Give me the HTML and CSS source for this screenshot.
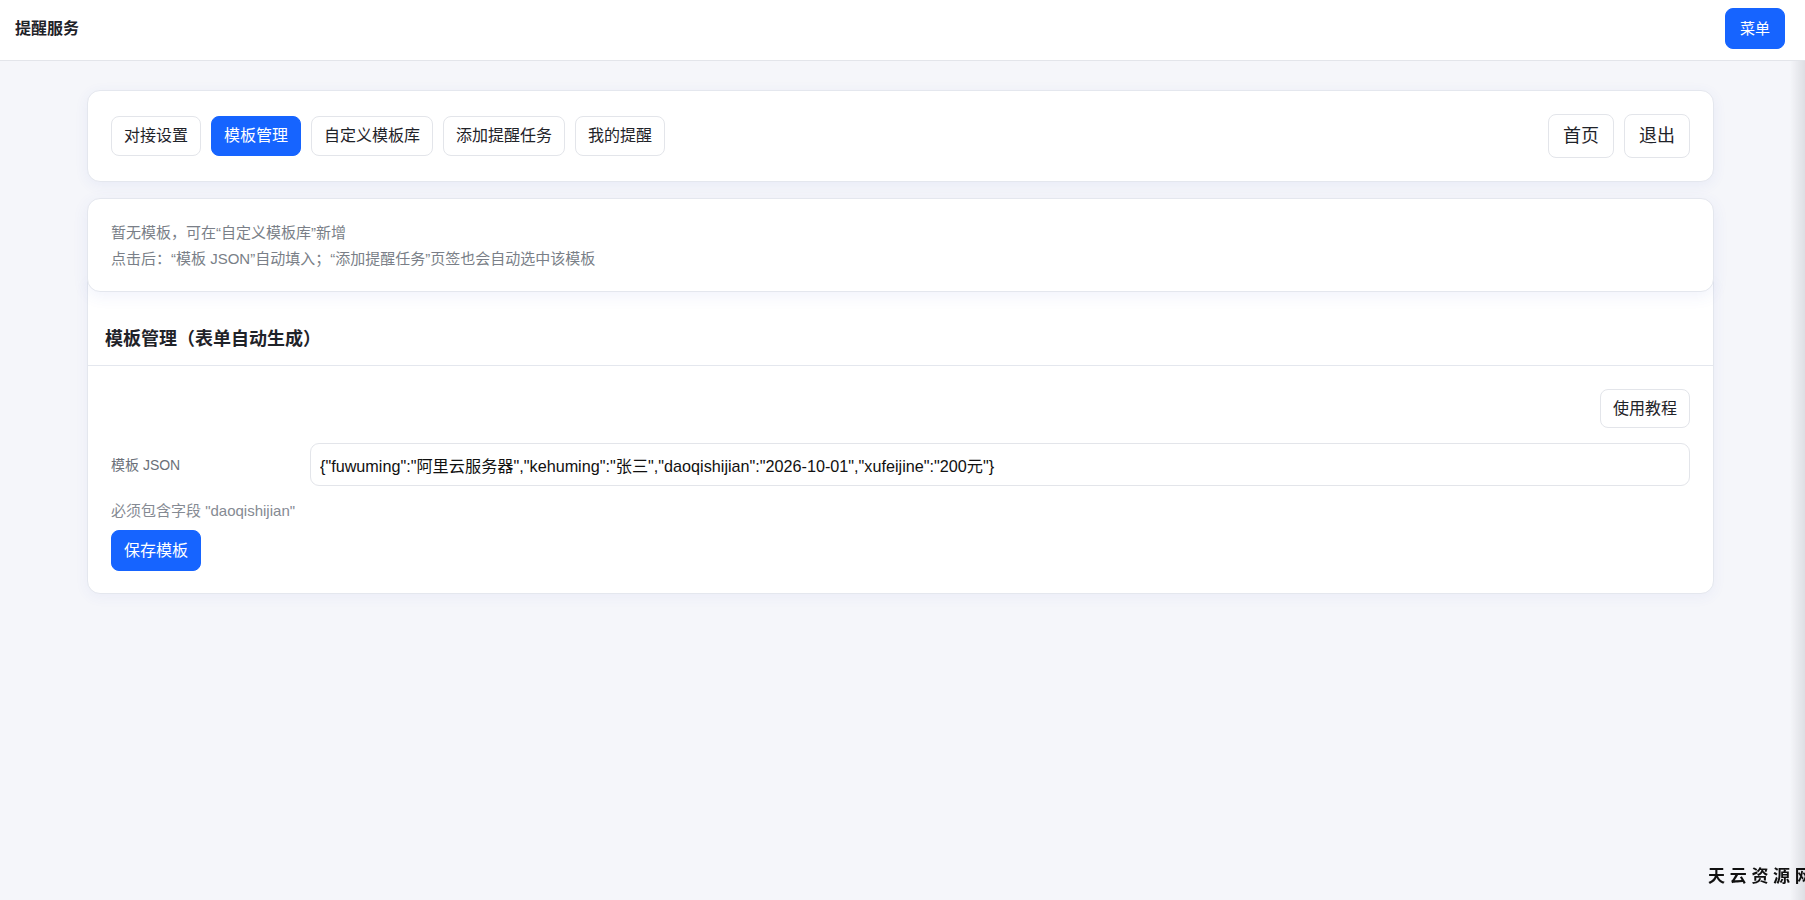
FILE: index.html
```html
<!DOCTYPE html>
<html lang="zh-CN">
<head>
<meta charset="utf-8">
<title>提醒服务</title>
<link rel="stylesheet" href="styles.css">
</head>
<body>
<header class="topbar">
  <div class="brand">提醒服务</div>
  <button class="btn btn-primary menu-btn">菜单</button>
</header>

<main class="container">
  <section class="card nav-card">
    <div class="tabs">
      <button class="btn tab">对接设置</button>
      <button class="btn tab btn-primary">模板管理</button>
      <button class="btn tab">自定义模板库</button>
      <button class="btn tab">添加提醒任务</button>
      <button class="btn tab">我的提醒</button>
    </div>
    <div class="nav-actions">
      <button class="btn big">首页</button>
      <button class="btn big">退出</button>
    </div>
  </section>

  <section class="card notice-card">
    <p class="notice-line">暂无模板，可在“自定义模板库”新增</p>
    <p class="notice-line">点击后：“模板 JSON”自动填入；“添加提醒任务”页签也会自动选中该模板</p>
  </section>

  <section class="card main-card">
    <h2 class="main-title">模板管理（表单自动生成）</h2>
    <div class="main-body">
      <div class="toolbar">
        <button class="btn tool-btn">使用教程</button>
      </div>
      <div class="form-row">
        <label class="form-label">模板 JSON</label>
        <input class="form-input" type="text" value='{"fuwuming":"阿里云服务器","kehuming":"张三","daoqishijian":"2026-10-01","xufeijine":"200元"}'>
      </div>
      <div class="hint">必须包含字段 "daoqishijian"</div>
      <button class="btn btn-primary save-btn">保存模板</button>
    </div>
  </section>
</main>

<div class="edge-shade"></div>
<div class="watermark">天云资源网</div>
</body>
</html>
```
FILE: styles.css
```css
html, body {
  margin: 0;
  padding: 0;
  overflow: hidden;
}
body {
  background: #f5f6fa;
  font-family: "Liberation Sans", "Noto Sans CJK SC", sans-serif;
  color: #1f2329;
  height: 900px;
}
.topbar {
  height: 61px;
  box-sizing: border-box;
  background: #ffffff;
  border-bottom: 1px solid #e3e5ea;
  display: flex;
  align-items: center;
  justify-content: space-between;
  padding: 0 20px 3px 15px;
}
.brand {
  font-size: 16px;
  font-weight: 700;
  line-height: 20px;
  color: #1f2329;
}
.btn {
  font-family: "Liberation Sans", "Noto Sans CJK SC", sans-serif;
  font-size: 16px;
  line-height: 20px;
  background: #ffffff;
  color: #1f2329;
  border: 1px solid #e3e5ea;
  border-radius: 8px;
  padding: 0 12px;
  height: 40px;
  box-sizing: border-box;
  cursor: pointer;
  margin: 0;
}
.btn-primary {
  background: #1664ff;
  border-color: #1664ff;
  color: #ffffff;
}
.menu-btn {
  font-size: 15px;
  padding: 0 14px;
  height: 41px;
}
.container {
  width: 1627px;
  margin: 29px 0 0 87px;
}
.card {
  background: #ffffff;
  border: 1px solid #e4e7ee;
  border-radius: 13px;
  box-sizing: border-box;
}
.nav-card {
  display: flex;
  align-items: center;
  justify-content: space-between;
  padding: 23px;
  box-shadow: 0 3px 14px rgba(60, 90, 200, 0.07);
}
.tabs {
  display: flex;
  gap: 10px;
}
.nav-actions {
  display: flex;
  gap: 10px;
}
.big {
  font-size: 18px;
  height: 44px;
  padding: 0 14px;
}
.notice-card {
  margin-top: 16px;
  padding: 21px 23px 19px;
  position: relative;
  z-index: 1;
  box-shadow: 0 4px 16px rgba(60, 90, 200, 0.08);
}
.notice-line {
  margin: 0;
  font-size: 15px;
  line-height: 26px;
  color: #7a7f88;
}
.main-card {
  margin-top: -12px;
  border-radius: 0 0 13px 13px;
  box-shadow: 0 3px 14px rgba(60, 90, 200, 0.06);
}
.main-title {
  margin: 0;
  font-size: 18px;
  font-weight: 700;
  line-height: 26px;
  padding: 45px 17px 13px;
  border-bottom: 1px solid #e4e7ee;
  color: #1f2329;
}
.main-body {
  padding: 23px 23px 22px;
}
.toolbar {
  display: flex;
  justify-content: flex-end;
}
.tool-btn {
  height: 39px;
}
.form-row {
  display: grid;
  grid-template-columns: 199px 1fr;
  align-items: center;
  margin-top: 15px;
}
.form-label {
  font-size: 14px;
  line-height: 20px;
  color: #6b7079;
}
.form-input {
  height: 43px;
  box-sizing: border-box;
  border: 1px solid #e3e5ea;
  border-radius: 9px;
  padding: 0 9px;
  font-family: "Liberation Sans", "Noto Sans CJK SC", sans-serif;
  font-size: 16.2px;
  color: #111111;
  background: #ffffff;
  outline: none;
  width: 100%;
}
.hint {
  margin-top: 14px;
  font-size: 15px;
  line-height: 22px;
  color: #858a93;
}
.save-btn {
  margin-top: 8px;
  height: 41px;
  display: block;
}
.edge-shade {
  position: fixed;
  top: 61px;
  right: 0;
  bottom: 0;
  width: 15px;
  background: linear-gradient(to right, rgba(225, 227, 233, 0), rgba(222, 223, 228, 1));
  pointer-events: none;
}
.watermark {
  position: fixed;
  left: 1708px;
  top: 866px;
  font-size: 17px;
  line-height: 17px;
  font-weight: 700;
  letter-spacing: 4.7px;
  color: #111111;
  white-space: nowrap;
  font-family: "Noto Sans CJK SC", sans-serif;
}
```
